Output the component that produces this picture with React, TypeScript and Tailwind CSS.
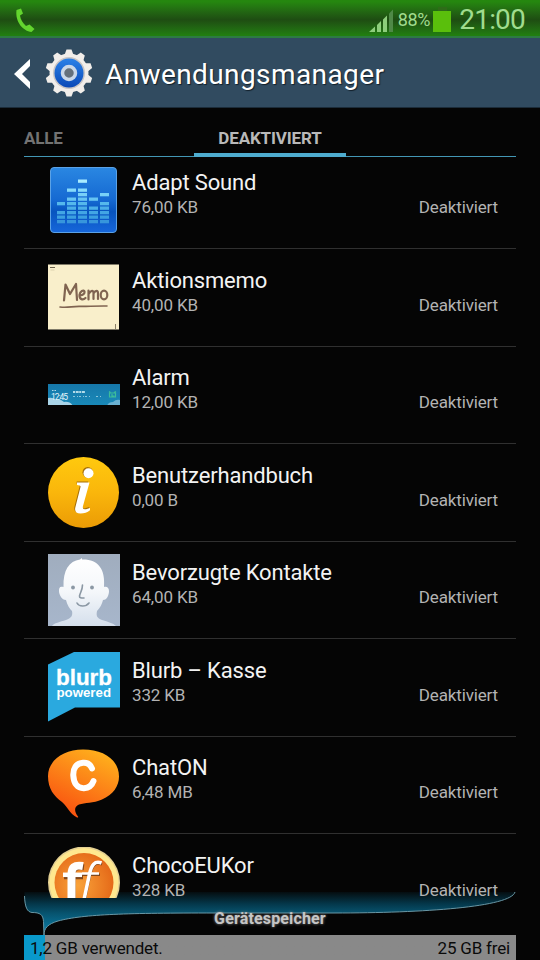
import type { ReactNode } from "react";

interface AppEntry {
  name: string;
  size: string;
  icon: ReactNode;
}

// Height of each equalizer column, as the list of lit rows (0 = bottom)
const EQ_COLUMNS = [
  { x: 9, rows: [0, 1, 2, 4] },
  { x: 19, rows: [0, 1, 2, 3, 4, 5, 7] },
  { x: 30, rows: [0, 1, 2, 3, 4, 5, 6, 7, 9] },
  { x: 41, rows: [0, 1, 2, 3, 5] },
  { x: 52, rows: [0, 1, 2, 3, 4, 6] },
];

const EQ_COLORS = [
  "#3796dc",
  "#3b9fe0",
  "#42a5e4",
  "#4baee8",
  "#55b8ec",
  "#67c4f2",
  "#78d0f7",
  "#86dafb",
  "#98e3ff",
  "#a9ecff",
];

function AdaptSoundIcon() {
  return (
    <svg width="72" height="72" viewBox="-2 -3 72 72">
      <defs>
        <linearGradient id="eqBg" x1="0" y1="0" x2="0" y2="1">
          <stop offset="0" stopColor="#2a87e2" />
          <stop offset="0.5" stopColor="#1569d2" />
          <stop offset="0.68" stopColor="#0754bf" />
          <stop offset="1" stopColor="#1767db" />
        </linearGradient>
      </defs>
      <rect x="0.5" y="0.5" width="66" height="65" rx="3.5" fill="url(#eqBg)" stroke="#5ba2e6" />
      {EQ_COLUMNS.map((col, i) =>
        col.rows.map((row) => (
          <rect
            key={`${i}-${row}`}
            x={col.x - 2}
            y={53 - row * 4.5}
            width={i === 0 ? 8 : 9}
            height="3.3"
            fill={EQ_COLORS[row]}
          />
        ))
      )}
    </svg>
  );
}

function MemoIcon() {
  return (
    <svg width="72" height="72" viewBox="0 0 72 72">
      <rect x="0" y="2.500" width="71" height="65" fill="#f9efcb" />
      <path d="M2 5.5h5" stroke="#6b614c" strokeWidth="1" />
      <path d="M2.500 8h4" stroke="#ded3b0" strokeWidth="1" />
      <path d="M67.500 62v5" stroke="#8c8068" strokeWidth="1" />
      <g fill="none" stroke="#806451" strokeLinecap="round" strokeLinejoin="round" strokeWidth="2.200">
        <path d="M16 38.500 17.500 22.500 22 32 28 22 29 38" />
        <path d="M32 33.500c3-.5 5-2 4.500-4-.8-2-4.500-.5-5 3.500-.3 4.500 3.500 5.500 6 3" />
        <path d="M40.500 37.500V28.500M41 31.500c2-3.500 4.500-3.500 4.500-.5v6M45.500 31.500c2-3.500 4.500-3.500 4.500 0v5.500" />
        <ellipse cx="56" cy="33" rx="3.300" ry="4.300" />
        <path d="M12 45c8 1 12-.8 20-.6s14-.6 27-.4" strokeWidth="1.600" />
      </g>
    </svg>
  );
}

function AlarmIcon() {
  return (
    <svg width="72" height="72" viewBox="0 1 72 72">
      <defs>
        <linearGradient id="alarmBg" x1="0" y1="0" x2="0" y2="1">
          <stop offset="0" stopColor="#1677a9" />
          <stop offset="1" stopColor="#1989b8" />
        </linearGradient>
        <clipPath id="alarmClip">
          <rect x="0" y="26" width="72" height="21" />
        </clipPath>
      </defs>
      <rect x="0" y="26" width="72" height="21" fill="url(#alarmBg)" />
      <g clipPath="url(#alarmClip)" fill="#a9d4e8">
        <path d="M0 40q5-1 8 2 5-1 8 2 6-1 9 4H0z" />
        <path d="M59 48q1-4 6-4 3-3 7-2v6z" fill="#6ab1d1" />
      </g>
      <text x="3" y="41.500" fontSize="8.500" fill="#e3f4fa" fontFamily="Roboto, sans-serif" textLength="17">
        12:45
      </text>
      <g stroke="#b2dbe9" fill="none">
        <path d="M4 32.500h4" strokeDasharray="1.500 1" strokeWidth="1" />
        <path d="M25 34h12" strokeDasharray="2 .7 3 .5" strokeWidth="2" />
        <path d="M25 38.500h17M48 38.500h5" strokeDasharray="2 2 1 1" strokeWidth="1.200" opacity=".75" />
      </g>
      <path d="M61.500 35h6v4h-6zM62.500 34.500l-1.500-1m5 1 2-1M64 36v2h2.500" fill="none" stroke="#3dbd9a" strokeWidth="1.200" />
    </svg>
  );
}

function ManualIcon() {
  return (
    <svg width="72" height="72" viewBox="0 0 72 72">
      <defs>
        <linearGradient id="manualBg" x1="0" y1="0" x2="0" y2="1">
          <stop offset="0" stopColor="#ffc90e" />
          <stop offset="0.5" stopColor="#fab60b" />
          <stop offset="1" stopColor="#eb9b05" />
        </linearGradient>
      </defs>
      <circle cx="35.500" cy="35.500" r="35.500" fill="url(#manualBg)" />
      <g fill="#a66f08" transform="translate(-.8 -1.900)">
        <circle cx="40.500" cy="17.200" r="5.200" />
        <path d="M29.500 26.500H41L35 50q-1 4 3 3.200L42 52v2.200q-4 3.300-9.500 3.300-6.500 0-5.200-6L32.500 31q.5-2-3-2z" />
      </g>
      <g fill="#fff" transform="translate(0 -1)">
        <circle cx="40.500" cy="17.200" r="5" />
        <path d="M29 26.500H41.500L35 50q-1 4 3 3.200L42 52v2.200q-4 3.300-9.500 3.300-6.500 0-5.200-6L32.500 31q.5-2-3.500-2z" />
      </g>
    </svg>
  );
}

function ContactIcon() {
  return (
    <svg width="72" height="72" viewBox="0 0 72 72">
      <defs>
        <linearGradient id="contactBg" x1="0" y1="0" x2="0" y2="1">
          <stop offset="0" stopColor="#a0adbe" />
          <stop offset="1" stopColor="#a7b6cb" />
        </linearGradient>
        <linearGradient id="contactHead" x1="0" y1="0" x2="0" y2="1">
          <stop offset="0" stopColor="#ffffff" />
          <stop offset="0.5" stopColor="#f4f7fa" />
          <stop offset="1" stopColor="#d5dfec" />
        </linearGradient>
      </defs>
      <path fill="url(#contactBg)" d="M0 0h72v72H0z" />
      <path
        fill="url(#contactHead)"
        d="M34 4l-2 1.500C21 7 15 16 15.500 33c-4-1-4.500 1-4.500 4 0 4 3 9 7 9 1 5 4 9 6 11 1 5-1 7-6 9-6 2-12 3-14 6h64c-3-3-8-4-14-6-5-2-6-4-5-9 3-3 5-7 6-11 4 0 6-5 6-9 0-3-2-5-5-4C57.500 15 50 5 34 5.500z"
      />
      <g fill="none" stroke="#8b98a4" strokeWidth="1.600" strokeLinecap="round">
        <path d="M34.500 31c0 5-2.500 8-3 11-.2 2 1.500 2 4.500 2" />
        <path d="M29 49c2 4 9 4 12 0" />
      </g>
      <circle cx="25" cy="33.500" r="1.900" fill="#8b98a4" />
      <circle cx="44" cy="33.500" r="1.900" fill="#8b98a4" />
    </svg>
  );
}

function BlurbIcon() {
  return (
    <svg width="72" height="72" viewBox="0 0.500 72 72">
      <path d="M0 13 27 0h45v56H27L0 70z" fill="#2aa9df" />
      <g fill="#fff" fontFamily="'Liberation Sans', Arial, sans-serif" fontWeight="700">
        <text x="8" y="33.500" fontSize="22.500" textLength="56" lengthAdjust="spacingAndGlyphs" stroke="#fff" strokeWidth=".3">
          blurb
        </text>
        <text x="8.500" y="45.500" fontSize="12" textLength="54.500" lengthAdjust="spacingAndGlyphs">
          powered
        </text>
      </g>
    </svg>
  );
}

function ChatOnIcon() {
  return (
    <svg width="72" height="72" viewBox="0 1 72 72">
      <defs>
        <linearGradient id="chatBg" x1="0.75" y1="0" x2="0.25" y2="1">
          <stop offset="0" stopColor="#ffb21c" />
          <stop offset="0.45" stopColor="#fc8418" />
          <stop offset="1" stopColor="#f94d0f" />
        </linearGradient>
      </defs>
      <path
        fill="url(#chatBg)"
        d="M35 1.500C15 1.500 0 13 0 28c0 13 6 20 14 26 6 5 7 11 15 15.500 1 .3 1.500-.3 1-1-4-5-4-10 1-12 6-2 14-1 23-5 11-5 17-13 17-23C71 12 56 1.500 35 1.500z"
      />
      <path
        d="M44 20.500C42.500 16.500 39 14.500 35 14.800 28 15.300 25 20.500 25.300 27.500c.5 8 4.200 13 10.700 12.700 5-.3 8-3 9.500-7.200"
        fill="none"
        stroke="#fff"
        strokeWidth="6"
        strokeLinecap="round"
      />
    </svg>
  );
}

function ChocoIcon() {
  return (
    <svg width="72" height="72" viewBox="0 0.500 72 72">
      <defs>
        <radialGradient id="chocoBg" cx="0.4" cy="0.55" r="0.6">
          <stop offset="0" stopColor="#f9a339" />
          <stop offset="1" stopColor="#e56a19" />
        </radialGradient>
      </defs>
      <circle cx="36" cy="36" r="36" fill="#e3cf92" />
      <circle cx="36" cy="36" r="34.500" fill="#ffe88f" />
      <circle cx="36" cy="36" r="29.500" fill="url(#chocoBg)" />
      <g fill="none" stroke="#82481c" transform="translate(1 1.200)">
        <path d="M35 19.500C26 18.500 23.500 21 23.500 28v28M15 28.500H34" strokeWidth="6" />
        <path d="M53 16.500c-7-2.500-10 2-12 11l-6 28M34 27h17" strokeWidth="2.500" />
      </g>
      <g fill="none" stroke="#fff">
        <path d="M35 19.500C26 18 23.500 21 23.500 28v28" strokeWidth="8" />
        <path d="M15 28.300h19" strokeWidth="4.500" />
        <path d="M53.500 16.500c-7-2.500-10 2-12 11l-6 28" strokeWidth="3.500" />
        <path d="M34 27h17" strokeWidth="2.500" />
      </g>
    </svg>
  );
}

const APPS: AppEntry[] = [
  { name: "Adapt Sound", size: "76,00 KB", icon: <AdaptSoundIcon /> },
  { name: "Aktionsmemo", size: "40,00 KB", icon: <MemoIcon /> },
  { name: "Alarm", size: "12,00 KB", icon: <AlarmIcon /> },
  { name: "Benutzerhandbuch", size: "0,00 B", icon: <ManualIcon /> },
  { name: "Bevorzugte Kontakte", size: "64,00 KB", icon: <ContactIcon /> },
  { name: "Blurb – Kasse", size: "332 KB", icon: <BlurbIcon /> },
  { name: "ChatON", size: "6,48 MB", icon: <ChatOnIcon /> },
  { name: "ChocoEUKor", size: "328 KB", icon: <ChocoIcon /> },
];

function StatusBar() {
  return (
    <div className="flex h-[38px] items-center border-b-2 border-[#2d7b43] bg-linear-to-b from-[#25870f] from-5% via-[#1e4d12] via-55% to-[#218010] pt-[3px] pr-[15px] pl-[15px] text-[#a0dc8e]">
      <svg width="21" height="24" viewBox="0 0 21 24" fill="#63d52e">
        <path d="M1.500 2 6 0.500l2 5-3 2c.5 4 3 8 6 10.500l3.500-1.500 5 4.500-3 3C8 23 0 14 1.500 2z" />
      </svg>
      <div className="ml-auto flex items-center">
        <svg width="25" height="24" viewBox="0 0 25 24" className="mt-0.5">
          <path d="M0 23 6 17.500V23zM8 16l4-4v11H8zM14 10.500l4-4V23h-4z" fill="#8dce7b" />
          <path d="M20 4.500 24 .5V23h-4z" fill="#4f8947" />
        </svg>
        <span className="ml-[4px] text-[18px] leading-6 tracking-[-0.3px]">88%</span>
        <svg width="19" height="26" viewBox="0 0 19 26" className="ml-[3px]">
          <path d="M5 0h9v4H5z" fill="#2e6c18" />
          <path d="M0 4h18v21H0z" fill="#5abf0c" />
        </svg>
        <span className="ml-[7px] text-[28px] leading-8 tracking-[-0.8px]">21:00</span>
      </div>
    </div>
  );
}

const GEAR_TEETH = [0, 36, 72, 108, 144, 180, 216, 252, 288, 324];

function Header() {
  return (
    <div className="flex h-[70px] items-center border-b border-[#1c2c39] bg-[#314b60] pl-[14px]">
      <svg width="17" height="30" viewBox="0 0 17 30" className="mt-0.5">
        <path d="M16 0v7L8 15l8 8v7L0 15z" fill="#fff" />
      </svg>
      <svg width="48" height="48" viewBox="-24 -24 48 48" className="ml-[14px]">
        <defs>
          <linearGradient id="gearBlue" x1="0" y1="0" x2="0" y2="1">
            <stop offset="0" stopColor="#2b81e8" />
            <stop offset="1" stopColor="#0b49b7" />
          </linearGradient>
        </defs>
        <g fill="#f2eeea">
          {GEAR_TEETH.map((deg) => (
            <path key={deg} d="M-4.500-18-2.500-23.500h5L4.500-18z" transform={`rotate(${deg})`} />
          ))}
          <circle r="19.500" />
        </g>
        <circle r="16" fill="#c8c5c5" />
        <circle r="14.500" fill="url(#gearBlue)" />
        <circle r="6.500" fill="#65717c" stroke="#cbd8e8" strokeWidth="3.500" />
      </svg>
      <h1 className="ml-[12px] pt-[4px] text-[28px] leading-9 tracking-[0.4px] text-white [text-shadow:1px_1px_1px_#13202b]">
        Anwendungsmanager
      </h1>
    </div>
  );
}

function Tabs() {
  return (
    <div className="mx-6 flex h-[49px] items-end border-b border-[#4397b5] text-[17px] leading-5 font-bold tracking-[-0.15px]">
      <div className="w-[170px] pb-[8px] text-[#737373]">ALLE</div>
      <div className="-mb-px w-[152px] border-b-4 border-[#4eaccf] pb-[5px] text-center text-[#b9b9b9]">
        DEAKTIVIERT
      </div>
    </div>
  );
}

function AppRow({ app }: { app: AppEntry }) {
  return (
    <div className="flex h-[97.5px] border-b border-[#303030] pl-6">
      <div className="mt-[12.500px] h-[72px] w-[72px] shrink-0">{app.icon}</div>
      <div className="ml-3 grow pt-[17.500px]">
        <p className="text-[22px] leading-[28px] tracking-[-0.16px] text-[#f3f3f3]">{app.name}</p>
        <div className="-mt-[1px] flex justify-between pr-[18px] text-[17px] leading-[22px] tracking-[-0.15px] text-[#b3b3b3]">
          <span>{app.size}</span>
          <span>Deaktiviert</span>
        </div>
      </div>
    </div>
  );
}

function StorageFooter() {
  return (
    <div className="relative mx-6 h-[62px]">
      <svg width="492" height="46" viewBox="0 0 492 46" className="absolute -top-[8px] left-0">
        <defs>
          <linearGradient id="storageGlow" x1="0" y1="0" x2="0" y2="46" gradientUnits="userSpaceOnUse">
            <stop offset="0" stopColor="#050606" />
            <stop offset="0.3" stopColor="#04374a" />
            <stop offset="0.5" stopColor="#07536e" />
            <stop offset="1" stopColor="#0a86b3" />
          </linearGradient>
        </defs>
        <path
          d="M.5 2C0 15 2 22 8 22.500c8 0 11 2 11.500 9L20 45c0-7 4-11 14-14C60 24 105 23 190 23h120c90 0 177-6 181-21"
          fill="url(#storageGlow)"
        />
        <path
          d="M.5 6C1 17 3 22 8 22.500c8 0 11 2 11.500 9L20 45c0-7 4-11 14-14C60 24 105 23 190 23h120c90 0 177-6 181-21"
          fill="none"
          stroke="#6997a5"
          strokeWidth="1"
        />
      </svg>
      <div className="relative flex h-full flex-col">
        <p className="h-[37px] pt-[11px] text-center text-[16px] leading-5 font-bold tracking-[0.15px] text-[#c5c5c5] [text-shadow:0_0_3px_#888]">
          Gerätespeicher
        </p>
        <div className="flex h-[25px] items-center justify-between bg-linear-to-r from-[#0999cb] from-[21px] to-[#898989] to-[21px] pr-[6px] pl-[6px] text-[17px] leading-6 tracking-[-0.2px] text-[#0a0a0a]">
          <span>1,2 GB verwendet.</span>
          <span>25 GB frei</span>
        </div>
      </div>
    </div>
  );
}

export default function App() {
  return (
    <div className="flex h-[960px] w-[540px] flex-col overflow-hidden bg-[#050505] font-['Roboto',sans-serif]">
      <StatusBar />
      <Header />
      <Tabs />
      <div className="relative z-10 mx-6 h-[741px] overflow-hidden">
        {/* list is scrolled a few pixels past its top */}
        <div className="-mt-[5.500px]">
          {APPS.map((app) => (
            <AppRow key={app.name} app={app} />
          ))}
        </div>
      </div>
      <StorageFooter />
    </div>
  );
}
